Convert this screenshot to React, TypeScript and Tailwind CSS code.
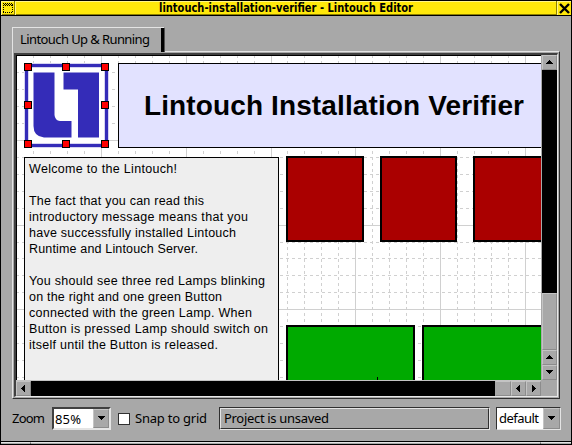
import React from "react";

const V_LINES = [33, 50, 67, 84, 101, 118, 135, 152, 169, 186, 203, 220, 237, 254, 271, 287, 304, 321, 338, 355, 372, 389, 406, 423, 440, 457, 474, 491, 508, 525];
const H_LINES = [72, 89, 106, 123, 140, 157, 174, 191, 208, 225, 242, 258, 275, 292, 309, 326, 343, 360, 377];
const V_MAJOR = [101, 186, 271, 355, 440, 525];
const H_MAJOR = [140, 225, 309];

function Grid() {
  return (
    <svg className="absolute inset-0" width="524" height="324" viewBox="17 56 524 324" shapeRendering="crispEdges" stroke="#d0d0d0">
      {V_LINES.map((x) => (
        <line key={x} x1={x + 0.5} x2={x + 0.5} y1="55" y2="380" strokeDasharray={V_MAJOR.includes(x) ? undefined : "3 3"} />
      ))}
      {H_LINES.map((y) => (
        <line key={y} y1={y + 0.5} y2={y + 0.5} x1="16" x2="541" strokeDasharray={H_MAJOR.includes(y) ? undefined : "3 3"} />
      ))}
    </svg>
  );
}

const HANDLES = [[0, 0], [38, 0], [77, 0], [0, 38], [77, 38], [0, 77], [38, 77], [77, 77]];

function Logo() {
  return (
    <div className="absolute left-[7px] top-[7px] h-[85px] w-[85px] bg-white">
      <svg width="85" height="85" viewBox="0 0 85 85">
        <rect x="2.5" y="2.5" width="80" height="80" fill="#fff" stroke="#342cb8" strokeWidth="3.4" />
        <path d="M9.5 9.500H30.500V52Q31 57.500 36 58H47.500V74.500H20Q9.500 73.500 9.500 63Z" fill="#342cb8" />
        <path d="M39.500 9.500H75V74.500H54V26.500H39.500Z" fill="#342cb8" />
        <g shapeRendering="crispEdges" fill="#f00" stroke="#000">
          {HANDLES.map(([x, y]) => (
            <rect key={`${x}-${y}`} x={x + 0.5} y={y + 0.5} width="7" height="7" />
          ))}
        </g>
      </svg>
    </div>
  );
}

const ARROWS = {
  up: "M1 6h7v-1h-1v-1h-1v-1h-1v-1h-1v1h-1v1h-1v1h-1z",
  down: "M1 2h7v1h-1v1h-1v1h-1v1h-1v-1h-1v-1h-1v-1h-1z",
  left: "M6 1v7h-1v-1h-1v-1h-1v-1h-1v-1h1v-1h1v-1h1v-1z",
  right: "M3 1v7h1v-1h1v-1h1v-1h1v-1h-1v-1h-1v-1h-1v-1z",
};

function Arrow({ dir, className = "" }: { dir: keyof typeof ARROWS; className?: string }) {
  return (
    <div className={`flex shrink-0 items-center justify-center border border-t-[#c4c4c4] border-l-[#c4c4c4] border-r-[#8c8c8c] border-b-[#8c8c8c] bg-[#a8a8a8] ${className}`}>
      <svg width="9" height="9" shapeRendering="crispEdges"><path d={ARROWS[dir]} /></svg>
    </div>
  );
}

const MESSAGE = [
  ["Welcome to the Lintouch!", 148], ["", 0],
  ["The fact that you can read this", 175], ["introductory message means that you", 219],
  ["have successfully installed Lintouch", 207], ["Runtime and Lintouch Server.", 169], ["", 0],
  ["You should see three red Lamps blinking", 236], ["on the right and one green Button", 193],
  ["connected with the green Lamp. When", 223], ["Button is pressed Lamp should switch on", 239],
  ["itself until the Button is released.", 189],
] as const;

function Label({ text, width, className = "" }: { text: string; width: number; className?: string }) {
  return (
    <svg className={`block shrink-0 overflow-visible ${className}`} width={width} height="16">
      <text x="0" y="12" textLength={width} fill="#000">{text}</text>
    </svg>
  );
}

function Canvas() {
  return (
    <div className="relative h-[324px] w-[524px] shrink-0 overflow-hidden bg-white">
      <Grid />
      <Logo />
      <div className="absolute left-[101px] top-[7px] h-[85px] w-[430px] border border-black bg-[#e2e2ff] pl-[25px] pt-[24px] font-['Liberation_Sans',sans-serif] text-[28px] font-bold">
        <svg className="block overflow-visible" width="380" height="34"><text x="0" y="27" textLength="380">Lintouch Installation Verifier</text></svg>
      </div>
      <div className="absolute left-[7px] top-[101px] h-[240px] w-[255px] border border-black bg-[#eee] pl-1 pt-[3px] font-['Liberation_Sans',sans-serif] text-[12.5px]">
        {MESSAGE.map(([text, width], i) => <Label key={i} text={text} width={width} />)}
      </div>
      <div className="absolute left-[269px] top-[100px] h-[86px] w-[78px] border-2 border-black bg-[#a00]" />
      <div className="absolute left-[363px] top-[100px] h-[86px] w-[77px] border-2 border-black bg-[#a00]" />
      <div className="absolute left-[456px] top-[100px] h-[86px] w-[78px] border-2 border-black bg-[#a00]" />
      <div className="absolute left-[269px] top-[269px] h-[86px] w-[129px] border-2 border-black bg-[#0a0]" />
      <div className="absolute left-[405px] top-[269px] h-[86px] w-[129px] border-2 border-black bg-[#0a0]" />
      <div className="absolute left-[360px] top-[321px] h-[3px] w-px bg-black" />
    </div>
  );
}

export default function App() {
  return (
    <div className="flex h-[445px] w-[572px] flex-col overflow-hidden border border-black bg-[#a8a8a8] font-['Noto_Sans',sans-serif] text-[13px] leading-4 text-black">
      <header className="flex h-[15px] shrink-0 border-b border-black bg-[#ffe80b]">
        <div className="flex w-[14px] shrink-0 items-center justify-center border-r border-[#8d8000] shadow-[inset_1px_1px_#fff58a,inset_0_-1px_#8d8000]">
          <svg width="10" height="10" shapeRendering="crispEdges" fill="none" stroke="#000">
            <path d="M0 .5h10M1 1.500h10M0 2.500h10M.5 2v8M9.500 2v8M0 9.500h10" strokeDasharray="1 1" />
          </svg>
        </div>
        <div className="flex flex-1 justify-center shadow-[inset_1px_1px_#fff58a,inset_0_-1px_#8d8000]">
          <svg width="254" height="14" className="block overflow-visible font-['DejaVu_Sans_Condensed','DejaVu_Sans',sans-serif] text-[11.5px] font-bold"><text x="0" y="11" textLength="254" lengthAdjust="spacingAndGlyphs">lintouch-installation-verifier - Lintouch Editor</text></svg>
        </div>
        <div className="flex w-[15px] shrink-0 items-center justify-center border-l border-[#8d8000] shadow-[inset_1px_1px_#fff58a]">
          <svg width="11" height="11"><path d="M1 1L10 10M10 1L1 10" stroke="#000" strokeWidth="2.400" /></svg>
        </div>
      </header>

      <main className="flex flex-1 flex-col pl-[11px]">
        <div className="relative z-10 -mb-px mt-[11px] flex h-[25px] shrink-0">
          <div className="flex h-[25px] w-[153px] bg-[#a8a8a8]">
            <div className="h-full w-[149px] border-l border-t border-[#e4e4e4] pl-[7px] pt-[4px]">
              <Label text="Lintouch Up & Running" width={130} />
            </div>
            <div className="h-full w-[4px] border-r border-t border-r-[#505050] border-t-[#e4e4e4] bg-black" />
          </div>
        </div>
        <section className="flex h-[348px] w-[548px] shrink-0 border border-[#e4e4e4] border-b-[#303030] border-r-[#303030]">
          <div className="m-px flex flex-1 flex-col border-l-2 border-t-2 border-b border-r border-[#404040] border-b-[#e8e8e8] border-r-[#e8e8e8]">
            <div className="flex h-[325px]">
              <div className="border-l border-t border-black"><Canvas /></div>
              <div className="flex w-4 flex-col border-l border-[#a8a8a8]">
                <Arrow dir="up" className="h-[15px]" />
                <div className="h-[223px] bg-black" />
                <div className="flex-1 border border-[#8c8c8c] border-t-[#c4c4c4] border-l-[#c4c4c4]" />
                <Arrow dir="up" className="h-[15px]" />
                <Arrow dir="down" className="h-[15px]" />
              </div>
            </div>
            <div className="flex h-4 w-[525px] border-t border-[#c4c4c4]">
              <Arrow dir="left" className="w-[15px]" />
              <div className="w-[464px] bg-black" />
              <div className="flex-1 border border-[#8c8c8c] border-l-[#a8a8a8] border-t-[#c4c4c4]" />
              <Arrow dir="left" className="w-[15px]" />
              <Arrow dir="right" className="w-[15px]" />
            </div>
          </div>
        </section>

        <footer className="mt-2 flex h-[23px] items-center">
          <Label text="Zoom" width={33} className="mr-[7px]" />
          <div className="flex h-[23px] w-[59px] border-2 border-t-[#404040] border-l-[#404040] border-r-[#e4e4e4] border-b-[#e4e4e4] bg-white">
            <div className="w-[39px] pl-[1px] pt-[3px]"><Label text="85%" width={26} /></div>
            <Arrow dir="down" className="flex-1" />
          </div>
          <div className="ml-[7px] h-3 w-3 border border-[#303030] bg-white" />
          <Label text="Snap to grid" width={72} className="ml-[5px]" />
          <div className="ml-[12px] h-[23px] w-[271px] border border-[#303030] border-b-[#e4e4e4] border-r-[#e4e4e4]">
            <div className="h-[21px] border border-[#e4e4e4] border-b-[#303030] border-r-[#303030] pl-[3px] pt-[2px]"><Label text="Project is unsaved" width={105} /></div>
          </div>
          <div className="ml-[6px] flex h-[23px] w-[65px] border border-[#303030] border-b-[#e4e4e4] border-r-[#e4e4e4] bg-white">
            <div className="w-[46px] pl-[2px] pt-[3px]"><Label text="default" width={40} /></div>
            <Arrow dir="down" className="flex-1" />
          </div>
        </footer>
      </main>
      <div className="flex h-[3px] shrink-0 border-t border-black">
        <div className="w-[30px] border-r border-t border-[#606060] border-t-[#e4e4e4]" />
        <div className="flex-1 border-t border-[#e4e4e4]" />
        <div className="w-[31px] border-l border-t border-[#606060] border-t-[#e4e4e4]" />
      </div>
    </div>
  );
}
